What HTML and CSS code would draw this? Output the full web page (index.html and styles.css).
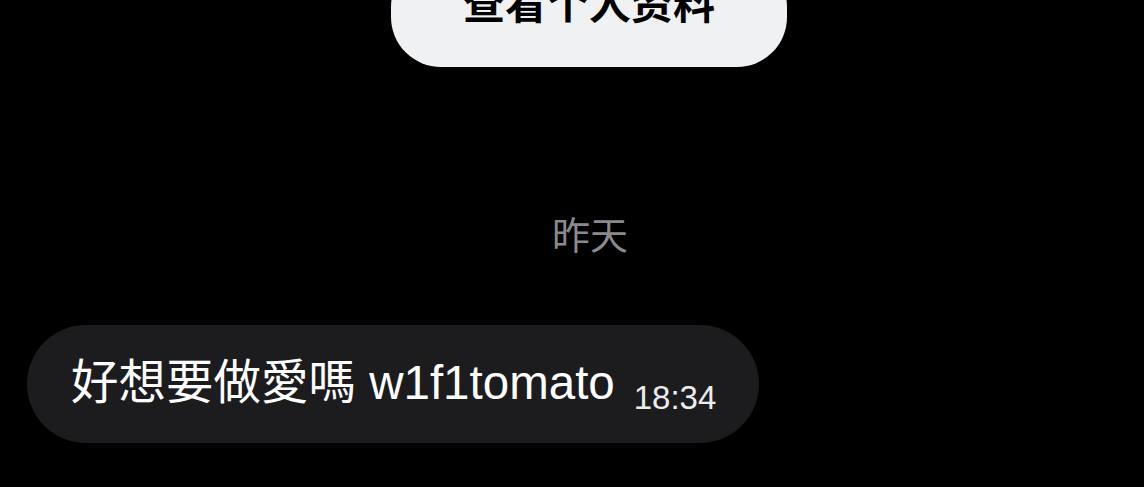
FILE: index.html
```html
<!DOCTYPE html>
<html lang="zh">
<head>
<meta charset="utf-8">
<link rel="stylesheet" href="styles.css">
</head>
<body>
<div class="screen">
  <div class="top">
    <div class="profile-btn">查看个人资料</div>
  </div>
  <div class="date">昨天</div>
  <div class="row">
    <div class="bubble">
      <span class="msg">好想要做愛嗎 w1f1tomato</span>
      <span class="time">18:34</span>
    </div>
  </div>
</div>
</body>
</html>
```

FILE: styles.css
```css
html, body {
  margin: 0;
  padding: 0;
  background: #000;
}
.screen {
  width: 1144px;
  height: 487px;
  overflow: hidden;
  background: #000;
  font-family: "Liberation Sans", "Noto Sans CJK TC", sans-serif;
  display: flex;
  flex-direction: column;
}
.top {
  display: flex;
  justify-content: center;
  padding-left: 34px;
}
.profile-btn {
  width: 396px;
  height: 110px;
  margin-top: -43px;
  background: #eff1f2;
  border-radius: 50px;
  display: flex;
  align-items: center;
  justify-content: center;
  font-family: "Noto Sans CJK SC", sans-serif;
  font-weight: 700;
  font-size: 42px;
  color: #000;
  padding-bottom: 24px;
  box-sizing: border-box;
}
.date {
  margin-top: 146px;
  align-self: center;
  padding-left: 36px;
  font-family: "Noto Sans CJK SC", sans-serif;
  font-size: 38px;
  line-height: 40px;
  color: #8a8a8e;
}
.row {
  margin-top: 72px;
  padding-left: 27px;
  display: flex;
}
.bubble {
  width: 732px;
  height: 118px;
  box-sizing: border-box;
  background: #1c1c1e;
  border-radius: 59px;
  display: flex;
  align-items: baseline;
  padding: 30px 0 0 44px;
}
.msg {
  font-size: 47.5px;
  color: #fff;
  line-height: 56px;
}
.time {
  margin-left: 19px;
  font-size: 33px;
  color: #ececee;
  position: relative;
  top: 10px;
}
```
